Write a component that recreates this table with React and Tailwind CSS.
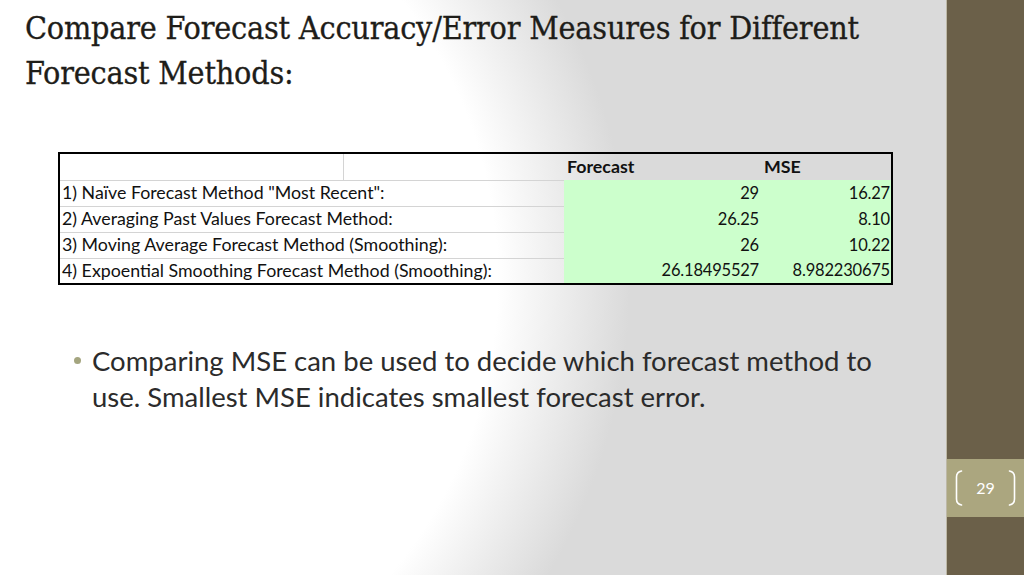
import React from "react";

const rows = [
  { label: '1) Naïve Forecast Method "Most Recent":', forecast: "29", mse: "16.27" },
  { label: "2) Averaging Past Values Forecast Method:", forecast: "26.25", mse: "8.10" },
  { label: "3) Moving Average Forecast Method (Smoothing):", forecast: "26", mse: "10.22" },
  { label: "4) Expoential Smoothing Forecast Method (Smoothing):", forecast: "26.18495527", mse: "8.982230675" },
];

const Bracket = ({ flip }) => (
  <svg width="8" height="36" viewBox="0 0 8 36" className={flip ? "-scale-x-100" : ""}>
    <path d="M6.5 1 Q1.5 2 1.5 7 V29 Q1.5 34 6.5 35" fill="none" stroke="#ffffff" strokeWidth="1.6" strokeLinecap="round" />
  </svg>
);

const App = () => {
  return (
    <div className="w-[1024px] h-[575px] flex overflow-hidden">
      <main className="flex-1 flex flex-col bg-[radial-gradient(ellipse_630px_600px_at_0_280px,#ffffff_79%,#dadada_100%)] pl-[25px] pt-[6px]">
        <h1 className="font-['DejaVu_Serif_Condensed','Liberation_Serif',serif] text-[32px] leading-[45px] tracking-[-0.2px] text-[#1e1d19] [-webkit-text-stroke:0.3px_#1e1d19]">
          Compare Forecast Accuracy/Error Measures for Different
          <br />
          Forecast Methods:
        </h1>

        <table className="ml-[33px] mt-[56px] w-[833px] border-collapse border-2 border-black font-['Lato',sans-serif] text-[17.8px] text-[#111] table-fixed">
          <colgroup>
            <col className="w-[284px]" />
            <col className="w-[221px]" />
            <col className="w-[197px]" />
            <col className="w-[131px]" />
          </colgroup>
          <thead>
            <tr className="h-[27px]">
              <th className="border-r border-[#d4d4d4]"></th>
              <th></th>
              <th className="text-left font-bold pl-[3px] leading-none">Forecast</th>
              <th className="text-left font-bold pl-[3px] leading-none">MSE</th>
            </tr>
          </thead>
          <tbody>
            {rows.map((r) => (
              <tr key={r.label} className="h-[26px]">
                <td colSpan={2} className="border-t border-[#d4d4d4] pl-[2px] whitespace-nowrap leading-none">
                  {r.label}
                </td>
                <td className="bg-[#ccffcc] text-right text-[16.5px] tracking-[-0.2px] pr-[2px] leading-none">{r.forecast}</td>
                <td className="bg-[#ccffcc] text-right text-[16.5px] tracking-[-0.2px] pr-[1px] leading-none">{r.mse}</td>
              </tr>
            ))}
          </tbody>
        </table>

        <div className="mt-[58px] ml-[49px] flex items-start gap-[11px] font-['Lato',sans-serif] text-[27.5px] leading-[36px] text-[#2b2b2b] w-[820px]">
          <span className="mt-[14px] w-[7px] h-[7px] rounded-full bg-[#a4a57f] shrink-0"></span>
          <p className="w-[795px]">
            Comparing MSE can be used to decide which forecast method to use. Smallest MSE indicates smallest forecast error.
          </p>
        </div>
      </main>

      <aside className="w-[78px] bg-[#6b6049] border-l border-[#bdb8a6] flex flex-col">
        <div className="mt-[459px] h-[58px] bg-[#aba67f] flex items-center justify-between px-[8px]">
          <Bracket />
          <span className="font-['Lato',sans-serif] text-[16px] text-white">29</span>
          <Bracket flip />
        </div>
      </aside>
    </div>
  );
};

export default App;
